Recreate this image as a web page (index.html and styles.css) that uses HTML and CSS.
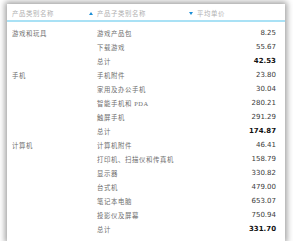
FILE: index.html
```html
<!DOCTYPE html>
<html lang="zh">
<head>
<meta charset="utf-8">
<link rel="stylesheet" href="styles.css">
</head>
<body>
<div class="card">
  <div class="head">
    <div class="hc">产品类别名称</div>
    <div class="hc sorted"><span class="tri up"></span>产品子类别名称</div>
    <div class="hc sorted"><span class="tri down"></span>平均单价</div>
  </div>
  <div class="body">
    <div class="row"><span class="c1">游戏和玩具</span><span class="c2">游戏产品包</span><span class="num">8.25</span></div>
    <div class="row"><span class="c1"></span><span class="c2">下载游戏</span><span class="num">55.67</span></div>
    <div class="row"><span class="c1"></span><span class="c2">总计</span><span class="num b">42.53</span></div>
    <div class="row"><span class="c1">手机</span><span class="c2">手机附件</span><span class="num">23.80</span></div>
    <div class="row"><span class="c1"></span><span class="c2">家用及办公手机</span><span class="num">30.04</span></div>
    <div class="row"><span class="c1"></span><span class="c2">智能手机和 PDA</span><span class="num">280.21</span></div>
    <div class="row"><span class="c1"></span><span class="c2">触屏手机</span><span class="num">291.29</span></div>
    <div class="row"><span class="c1"></span><span class="c2">总计</span><span class="num b">174.87</span></div>
    <div class="row"><span class="c1">计算机</span><span class="c2">计算机附件</span><span class="num">46.41</span></div>
    <div class="row"><span class="c1"></span><span class="c2">打印机、扫描仪和传真机</span><span class="num">158.79</span></div>
    <div class="row"><span class="c1"></span><span class="c2">显示器</span><span class="num">330.82</span></div>
    <div class="row"><span class="c1"></span><span class="c2">台式机</span><span class="num">479.00</span></div>
    <div class="row"><span class="c1"></span><span class="c2">笔记本电脑</span><span class="num">653.07</span></div>
    <div class="row"><span class="c1"></span><span class="c2">投影仪及屏幕</span><span class="num">750.94</span></div>
    <div class="row"><span class="c1"></span><span class="c2">总计</span><span class="num b">331.70</span></div>
  </div>
</div>
</body>
</html>
```
FILE: styles.css
```css
html, body {
  margin: 0;
  padding: 0;
  background: #ffffff;
}
body {
  padding: 4px 8px 0 7px;
  font-family: "Liberation Serif", "Noto Sans CJK SC", serif;
}
.card {
  width: 278px;
  height: 237px;
  background: #ffffff;
  box-shadow: 0 0 6px 2px rgba(0, 0, 0, 0.38);
  box-sizing: border-box;
}
.head {
  display: grid;
  grid-template-columns: 77px 100px 1fr;
  height: 18px;
  padding: 0 0 0 5px;
  border-bottom: 2px solid #a9e1f5;
  box-sizing: border-box;
  align-items: center;
}
.hc {
  display: flex;
  align-items: center;
  font-size: 6.4px;
  letter-spacing: 0.6px;
  color: #b0b0b0;
  padding-top: 2px;
}
.tri {
  width: 0;
  height: 0;
  border-left: 2.5px solid transparent;
  border-right: 2.5px solid transparent;
  margin-right: 4px;
}
.tri.up { border-bottom: 3px solid #1c8ed6; }
.tri.down { border-top: 3px solid #1c8ed6; }
.body {
  padding: 4px 9px 0 5px;
}
.row {
  display: grid;
  grid-template-columns: 85px 1fr auto;
  height: 14px;
  align-items: center;
}
.c1, .c2 {
  font-size: 6.4px;
  letter-spacing: 0.6px;
  color: #6e6e6e;
  white-space: nowrap;
}
.num {
  font-family: "DejaVu Sans", sans-serif;
  font-size: 7px;
  color: #3a3a3a;
  text-align: right;
}
.num.b {
  font-weight: bold;
  color: #111111;
}
```
